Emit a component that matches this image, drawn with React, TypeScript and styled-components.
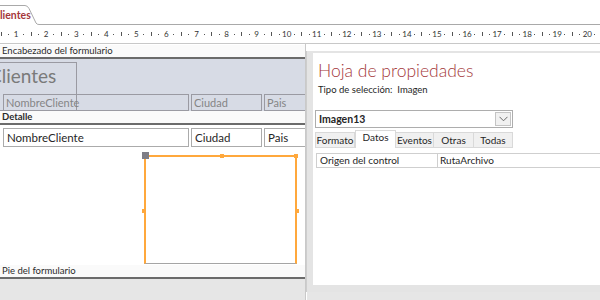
import React from 'react'
import styled, { createGlobalStyle } from 'styled-components'

const GlobalStyle = createGlobalStyle`
  html, body {
    margin: 0;
    padding: 0;
    background: #ffffff;
  }
  body {
    font-family: Lato, "Open Sans", "Liberation Sans", sans-serif;
    color: #262626;
  }
`

const CM = 30.1
const SLOT = CM / 4

type Mark = { kind: 'dot' | 'tick' | 'num'; value?: number }

const marks: Mark[] = []
for (let cm = 1; cm <= 21; cm++) {
  marks.push({ kind: 'dot' }, { kind: 'tick' }, { kind: 'dot' }, { kind: 'num', value: cm })
}

const tabs = [
  { label: 'Formato', width: 40 },
  { label: 'Datos', width: 41, active: true },
  { label: 'Eventos', width: 38 },
  { label: 'Otras', width: 40 },
  { label: 'Todas', width: 39 },
]

const fields = [
  { name: 'NombreCliente', width: 186 },
  { name: 'Ciudad', width: 71 },
  { name: 'Pais', width: 60 },
]

const App: React.FC = () => (
  <>
    <GlobalStyle />
    <Window>
      <TabStrip>
        <DocTab>
          <TabShape width="40" height="20" viewBox="0 0 40 20">
            <path d="M0 0.5 H25 Q27.5 0.5 29 3.5 L36 18 Q36.8 19.5 39 19.5 H40" fill="#fff" stroke="#a9a9a9" />
          </TabShape>
          <DocTabText>Clientes</DocTabText>
        </DocTab>
        <TabFiller />
      </TabStrip>

      <Ruler>
        <RulerTrack>
          {marks.map((m, i) => (
            <RulerSlot key={i}>
              {m.kind === 'dot' && <RulerDot />}
              {m.kind === 'tick' && <RulerTick />}
              {m.kind === 'num' && <RulerNum>{m.value}</RulerNum>}
            </RulerSlot>
          ))}
        </RulerTrack>
      </Ruler>

      <Workspace>
        <FormColumn>
          <SectionBar>Encabezado del formulario</SectionBar>
          <HeaderSection>
            <TitleBox>Clientes</TitleBox>
            <FieldRow $overlap>
              {fields.map((f) => (
                <HeaderLabel key={f.name} $width={f.width}>
                  {f.name}
                </HeaderLabel>
              ))}
            </FieldRow>
          </HeaderSection>
          <SectionBar $bold>Detalle</SectionBar>
          <DetailSection>
            <FieldRow>
              {fields.map((f) => (
                <TextBox key={f.name} $width={f.width}>
                  {f.name}
                </TextBox>
              ))}
            </FieldRow>
            <ImageFrame>
              <MoveHandle />
              <SizeHandle style={{ left: 74, top: -3 }} />
              <SizeHandle style={{ right: -3, top: -3 }} />
              <SizeHandle style={{ left: -4, top: 52 }} />
              <SizeHandle style={{ right: -4, top: 52 }} />
            </ImageFrame>
          </DetailSection>
          <SectionBar>Pie del formulario</SectionBar>
          <GrayFill />
        </FormColumn>

        <PaneColumn>
          <PropertyPane>
            <PaneTitle>Hoja de propiedades</PaneTitle>
            <SelectionType>
              Tipo de selección:&nbsp;&nbsp;Imagen
            </SelectionType>
            <Combo>
              <ComboText>Imagen13</ComboText>
              <ComboButton>
                <svg width="9" height="6" viewBox="0 0 9 6">
                  <path d="M0.5 0.8 L4.5 4.8 L8.5 0.8" fill="none" stroke="#6a6a6a" strokeWidth="1" />
                </svg>
              </ComboButton>
            </Combo>
            <Tabs>
              {tabs.map((t) => (
                <Tab key={t.label} $width={t.width} $active={!!t.active}>
                  {t.label}
                </Tab>
              ))}
            </Tabs>
            <PropGrid>
              <PropName>Origen del control</PropName>
              <PropValue>RutaArchivo</PropValue>
            </PropGrid>
          </PropertyPane>
          <GrayFill />
        </PaneColumn>
      </Workspace>
    </Window>
  </>
)

export default App

const Window = styled.div`
  width: 600px;
  height: 300px;
  overflow: hidden;
  display: flex;
  flex-direction: column;
  background: #ffffff;
`

const TabStrip = styled.div`
  height: 25px;
  display: flex;
  align-items: flex-end;
  flex-shrink: 0;
`

const DocTab = styled.div`
  position: relative;
  width: 40px;
  height: 20px;
  overflow: hidden;
  flex-shrink: 0;
`

const TabShape = styled.svg`
  position: absolute;
  left: 0;
  top: 0;
`

const DocTabText = styled.div`
  position: relative;
  margin-left: -7px;
  padding-top: 4px;
  font-size: 10.5px;
  font-weight: 700;
  color: #a4373a;
  line-height: 13px;
  white-space: nowrap;
`

const TabFiller = styled.div`
  flex: 1;
  height: 20px;
  border-bottom: 1px solid #a9a9a9;
  box-sizing: border-box;
`

const Ruler = styled.div`
  height: 18px;
  flex-shrink: 0;
  border-bottom: 1px solid #c8c8c8;
  overflow: hidden;
  background: #ffffff;
`

const RulerTrack = styled.div`
  display: flex;
  height: 100%;
  margin-left: -10.2px;
`

const RulerSlot = styled.div`
  width: ${SLOT}px;
  flex-shrink: 0;
  display: flex;
  align-items: center;
  justify-content: center;
`

const RulerDot = styled.span`
  width: 1px;
  height: 1px;
  background: #555;
`

const RulerTick = styled.span`
  width: 1px;
  height: 4px;
  background: #555;
`

const RulerNum = styled.span`
  font-size: 8px;
  color: #333;
  white-space: nowrap;
`

const Workspace = styled.div`
  flex: 1;
  display: flex;
  min-height: 0;
`

const FormColumn = styled.div`
  width: 305px;
  flex-shrink: 0;
  display: flex;
  flex-direction: column;
  padding-top: 1px;
  border-right: 1px solid #c9c9c9;
  overflow: hidden;
`

const SectionBar = styled.div<{ $bold?: boolean }>`
  height: 12px;
  flex-shrink: 0;
  border-bottom: 2px solid #6b6b6b;
  background: #fafafa;
  font-size: 9.5px;
  font-weight: ${(p) => (p.$bold ? 700 : 400)};
  line-height: 12px;
  padding-left: 2px;
  color: #2b2b2b;
  white-space: nowrap;
`

const HeaderSection = styled.div`
  height: 52px;
  flex-shrink: 0;
  background: #d7dbe5;
  padding-top: 3px;
  box-sizing: border-box;
`

const TitleBox = styled.div`
  margin-left: -13px;
  width: 90px;
  height: 49px;
  box-sizing: border-box;
  border: 1px solid #9a9aa2;
  font-size: 19px;
  line-height: 26px;
  color: #7a7a7a;
  padding-left: 1px;
`

const FieldRow = styled.div<{ $overlap?: boolean }>`
  display: flex;
  gap: 2px;
  padding-left: 3px;
  margin-top: ${(p) => (p.$overlap ? '-17px' : '3px')};
`

const HeaderLabel = styled.div<{ $width: number }>`
  width: ${(p) => p.$width}px;
  height: 17px;
  flex-shrink: 0;
  box-sizing: border-box;
  border: 1px solid #9a9aa2;
  font-size: 11px;
  line-height: 15px;
  padding-left: 2px;
  color: #858585;
`

const DetailSection = styled.div`
  height: 140px;
  flex-shrink: 0;
  background: #ffffff;
  display: flex;
  flex-direction: column;
`

const TextBox = styled.div<{ $width: number }>`
  width: ${(p) => p.$width}px;
  height: 19px;
  flex-shrink: 0;
  box-sizing: border-box;
  border: 1px solid #ababab;
  font-size: 11.5px;
  line-height: 17px;
  padding-left: 3px;
  color: #262626;
`

const ImageFrame = styled.div`
  position: relative;
  margin: 8px 0 0 144px;
  width: 153px;
  height: 109px;
  box-sizing: border-box;
  border: 2px solid #ffa83c;
  border-bottom: 1px solid #a5a5a5;
  background: #ffffff;
`

const MoveHandle = styled.span`
  position: absolute;
  left: -4px;
  top: -5px;
  width: 7px;
  height: 7px;
  background: #7e7e86;
`

const SizeHandle = styled.span`
  position: absolute;
  width: 4px;
  height: 4px;
  background: #ffa83c;
`

const GrayFill = styled.div`
  flex: 1;
  background: #e6e6e6;
`

const PaneColumn = styled.div`
  flex: 1;
  display: flex;
  flex-direction: column;
  padding-top: 7px;
  margin-left: 1px;
  min-width: 0;
`

const PropertyPane = styled.div`
  height: 241px;
  flex-shrink: 0;
  box-sizing: border-box;
  border-top: 2px solid #e4e4e4;
  border-left: 6px solid #e4e4e4;
  border-bottom: 7px solid #e4e4e4;
  box-shadow: -1px 0 0 #cdcdcd, 0 1px 0 #d2d2d2;
  background: #ffffff;
  padding: 6px 0 0 2px;
  display: flex;
  flex-direction: column;
`

const PaneTitle = styled.div`
  font-size: 17.5px;
  font-weight: 300;
  line-height: 24px;
  color: #a4373a;
  padding-left: 3px;
  white-space: nowrap;
`

const SelectionType = styled.div`
  font-size: 9.5px;
  line-height: 14px;
  padding-left: 3px;
  color: #262626;
  white-space: nowrap;
`

const Combo = styled.div`
  margin-top: 13px;
  width: 198px;
  height: 18px;
  box-sizing: border-box;
  border: 1px solid #adadad;
  display: flex;
  align-items: stretch;
`

const ComboText = styled.div`
  flex: 1;
  font-size: 10.5px;
  font-weight: 700;
  line-height: 16px;
  padding-left: 3px;
  color: #262626;
`

const ComboButton = styled.div`
  width: 14px;
  margin: 1px;
  border: 1px solid #c4c4c4;
  background: #f1f1f1;
  display: flex;
  align-items: center;
  justify-content: center;
`

const Tabs = styled.div`
  margin-top: 2px;
  display: flex;
  align-items: flex-end;
  height: 18px;
`

const Tab = styled.div<{ $width: number; $active: boolean }>`
  width: ${(p) => p.$width}px;
  height: ${(p) => (p.$active ? 18 : 16)}px;
  box-sizing: border-box;
  border: 1px solid #d9d9d9;
  border-left: ${(p) => (p.$active ? '1px solid #d9d9d9' : 'none')};
  border-bottom: ${(p) => (p.$active ? 'none' : '1px solid #d9d9d9')};
  background: ${(p) => (p.$active ? '#ffffff' : '#f0f0f0')};
  font-size: 10px;
  line-height: ${(p) => (p.$active ? 13 : 14)}px;
  text-align: center;
  color: #262626;
  white-space: nowrap;
  &:first-child {
    border-left: 1px solid #d9d9d9;
  }
`

const PropGrid = styled.div`
  margin-top: 5px;
  margin-left: 1px;
  display: grid;
  grid-template-columns: 121px 1fr;
  height: 13px;
  border: 1px solid #cfcfcf;
  border-right: none;
`

const PropName = styled.div`
  font-size: 10px;
  line-height: 12px;
  padding-left: 3px;
  border-right: 1px solid #cfcfcf;
  color: #262626;
`

const PropValue = styled.div`
  font-size: 10px;
  line-height: 12px;
  padding-left: 2px;
  color: #262626;
`
